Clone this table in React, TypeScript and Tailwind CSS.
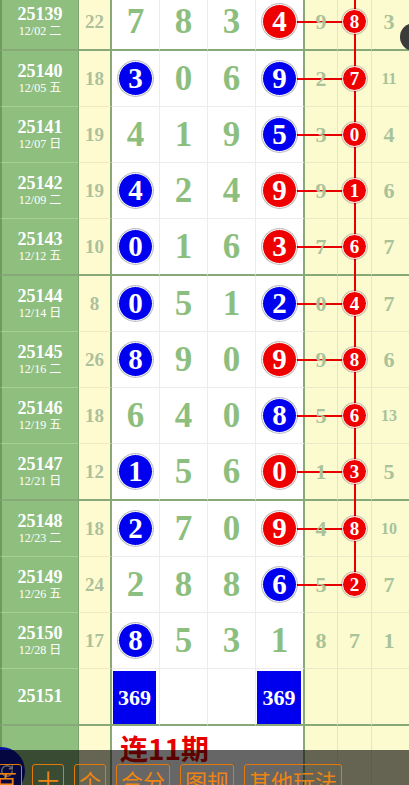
import { RotateCw } from 'lucide-react'

type Cell = [string, ('b' | 'r')?]

interface RowData {
  no: string
  date?: string
  cnt?: string
  d: Cell[]
  r: string[]
  ball?: boolean
  vline?: 'full' | 'top'
  end?: boolean
  box?: boolean
}

const rows: RowData[] = [
  { no: '25139', date: '12/02 二', cnt: '22', d: [['7'], ['8'], ['3'], ['4', 'r']], r: ['9', '8', '3'], ball: true, vline: 'full', end: true },
  { no: '25140', date: '12/05 五', cnt: '18', d: [['3', 'b'], ['0'], ['6'], ['9', 'b']], r: ['2', '7', '11'], ball: true, vline: 'full' },
  { no: '25141', date: '12/07 日', cnt: '19', d: [['4'], ['1'], ['9'], ['5', 'b']], r: ['3', '0', '4'], ball: true, vline: 'full' },
  { no: '25142', date: '12/09 二', cnt: '19', d: [['4', 'b'], ['2'], ['4'], ['9', 'r']], r: ['9', '1', '6'], ball: true, vline: 'full' },
  { no: '25143', date: '12/12 五', cnt: '10', d: [['0', 'b'], ['1'], ['6'], ['3', 'r']], r: ['7', '6', '7'], ball: true, vline: 'full', end: true },
  { no: '25144', date: '12/14 日', cnt: '8', d: [['0', 'b'], ['5'], ['1'], ['2', 'b']], r: ['0', '4', '7'], ball: true, vline: 'full' },
  { no: '25145', date: '12/16 二', cnt: '26', d: [['8', 'b'], ['9'], ['0'], ['9', 'r']], r: ['9', '8', '6'], ball: true, vline: 'full' },
  { no: '25146', date: '12/19 五', cnt: '18', d: [['6'], ['4'], ['0'], ['8', 'b']], r: ['5', '6', '13'], ball: true, vline: 'full' },
  { no: '25147', date: '12/21 日', cnt: '12', d: [['1', 'b'], ['5'], ['6'], ['0', 'r']], r: ['1', '3', '5'], ball: true, vline: 'full', end: true },
  { no: '25148', date: '12/23 二', cnt: '18', d: [['2', 'b'], ['7'], ['0'], ['9', 'r']], r: ['4', '8', '10'], ball: true, vline: 'full' },
  { no: '25149', date: '12/26 五', cnt: '24', d: [['2'], ['8'], ['8'], ['6', 'b']], r: ['5', '2', '7'], ball: true, vline: 'top' },
  { no: '25150', date: '12/28 日', cnt: '17', d: [['8', 'b'], ['5'], ['3'], ['1']], r: ['8', '7', '1'] },
  { no: '25151', d: [], r: ['', '', ''], box: true, end: true },
]

const serif = "font-['Liberation_Serif','Noto_Sans_CJK_SC',serif]"

function Ball({ v, c }: { v: string; c: 'b' | 'r' }) {
  return (
    <div
      className={`relative z-10 w-[35px] h-[35px] rounded-full flex items-center justify-center text-white text-[29px] font-bold leading-none border border-white shadow-[0_0_0_1px_rgba(0,0,0,0.25)] ${
        c === 'b' ? 'bg-[#0000ee]' : 'bg-[#ee0000]'
      }`}
    >
      {v}
    </div>
  )
}

function SmallNum({ v }: { v: string }) {
  return (
    <span className={`relative z-10 font-bold leading-none text-[#a9c29a] ${v.length > 1 ? 'text-[16px]' : 'text-[22px]'}`}>
      {v}
    </span>
  )
}

function Row({ row }: { row: RowData }) {
  const { end } = row
  const thick = 'border-b-2 border-b-[#87a977]'
  const leftB = end ? thick : 'border-b border-b-[#a5cf96]'
  const cntB = end ? thick : 'border-b border-b-[#efe9bf]'
  const digB = end ? thick : 'border-b border-b-[#ececec]'
  const rB = end ? thick : 'border-b border-b-[#e9eac6]'

  return (
    <div className={`relative flex ${end ? 'h-[57px]' : 'h-[56px]'}`}>
      {/* period + date */}
      <div className={`w-[79px] shrink-0 bg-[#8fbf7f] border-l-2 border-l-[#6e995f] border-r border-r-[#7ea56f] ${leftB} flex flex-col items-center justify-center text-white`}>
        <div className="text-[18px] font-bold leading-[19px]">{row.no}</div>
        {row.date && <div className="text-[12px] leading-[15px]">{row.date}</div>}
      </div>

      {/* gap count */}
      <div className={`w-[33px] shrink-0 bg-[#fefbd0] border-r-2 border-r-[#87a977] ${cntB} flex items-center justify-center`}>
        <span className="text-[19px] font-bold text-[#abc09b] leading-none">{row.cnt}</span>
      </div>

      {/* digits */}
      {row.box ? (
        <>
          <div className={`w-[48px] shrink-0 bg-white border-r border-r-[#ececec] ${digB} flex pl-[1px] pr-[3px] pt-[2px]`}>
            <div className="flex-1 bg-[#0000ee] flex items-center justify-center text-white text-[22px] font-bold">369</div>
          </div>
          <div className={`w-[48px] shrink-0 bg-white border-r border-r-[#ececec] ${digB}`} />
          <div className={`w-[48px] shrink-0 bg-white border-r border-r-[#ececec] ${digB}`} />
          <div className={`w-[49px] shrink-0 bg-white border-r-2 border-r-[#87a977] ${digB} flex pl-[1px] pr-[2px] pt-[2px]`}>
            <div className="flex-1 bg-[#0000ee] flex items-center justify-center text-white text-[22px] font-bold">369</div>
          </div>
        </>
      ) : (
        row.d.map(([v, c], i) => (
          <div
            key={i}
            className={`${i === 3 ? 'w-[49px] border-r-2 border-r-[#87a977]' : 'w-[48px] border-r border-r-[#ececec]'} shrink-0 bg-white ${digB} flex items-center justify-center`}
          >
            {c ? <Ball v={v} c={c} /> : <span className="text-[35px] font-bold leading-none text-[#8cbe7e]">{v}</span>}
          </div>
        ))
      )}

      {/* right trend columns */}
      <div className={`w-[33px] shrink-0 bg-[#fcfbcf] border-r border-r-[#e4e8c0] ${rB} flex items-center justify-center`}>
        <SmallNum v={row.r[0]} />
      </div>
      <div className={`w-[34px] shrink-0 bg-[#fcfbcf] border-r border-r-[#e4e8c0] ${rB} flex items-center justify-center`}>
        {row.ball ? (
          <div className="relative z-10 w-[25px] h-[25px] rounded-full bg-[#ee0000] border border-white shadow-[0_0_0_1px_rgba(0,0,0,0.2)] flex items-center justify-center text-white text-[19px] font-bold leading-none">
            {row.r[1]}
          </div>
        ) : (
          <SmallNum v={row.r[1]} />
        )}
      </div>
      <div className={`flex-1 bg-[#fcfbcf] ${rB} flex items-center justify-center pr-[3px]`}>
        <SmallNum v={row.r[2]} />
      </div>

      {/* trend lines */}
      {row.ball && <div className="absolute z-[5] left-[282px] w-[72px] top-[27px] h-[2px] bg-[#e80000]" />}
      {row.vline === 'full' && <div className="absolute z-[5] left-[354px] w-[2px] top-0 bottom-0 bg-[#e80000]" />}
      {row.vline === 'top' && <div className="absolute z-[5] left-[354px] w-[2px] top-0 h-[28px] bg-[#e80000]" />}
    </div>
  )
}

export default function App() {
  return (
    <div className={`relative w-[409px] h-[785px] overflow-hidden bg-white ${serif}`}>
      <div className="-mt-[6px]">
        {rows.map((row) => (
          <Row key={row.no} row={row} />
        ))}

        {/* summary row */}
        <div className="flex h-[59px]">
          <div className="w-[79px] shrink-0 bg-[#8fbf7f] border-l-2 border-l-[#6e995f] border-r border-r-[#7ea56f]" />
          <div className="w-[33px] shrink-0 bg-[#fefbd0] border-r-2 border-r-[#87a977]" />
          <div className="w-[193px] shrink-0 bg-white border-r-2 border-r-[#87a977] pl-[8px] pt-[4px]">
            <span className="font-['Noto_Sans_CJK_SC',sans-serif] text-[28px] font-bold leading-[36px] text-[#e60000]">连11期</span>
          </div>
          <div className="w-[33px] shrink-0 bg-[#fcfbcf] border-r border-r-[#e4e8c0]" />
          <div className="w-[34px] shrink-0 bg-[#fcfbcf] border-r border-r-[#e4e8c0]" />
          <div className="flex-1 bg-[#fcfbcf]" />
        </div>
      </div>

      {/* floating handle at right */}
      <div className="absolute left-[400px] top-[23px] w-[34px] h-[28px] rounded-full bg-[#3b3b3b]" />

      {/* floating round button bottom-left */}
      <div className="absolute left-[-23px] top-[747px] w-[48px] h-[48px] rounded-full bg-[#0c12a0] flex items-center justify-end pr-[11px]">
        <RotateCw className="w-[14px] h-[14px] text-white" strokeWidth={2.5} />
      </div>

      {/* bottom tool bar */}
      <div className="absolute left-0 right-0 top-[750px] h-[35px] bg-black/60 overflow-hidden">
        <div className="flex gap-[10px] ml-[-10px] mt-[14px] font-['Noto_Sans_CJK_SC',sans-serif]">
          {['百', '十', '个', '合分', '图规', '其他玩法'].map((t) => (
            <div key={t} className="h-[32px] px-[4px] border border-[#e2790b] rounded-[3px] text-[#f08410] text-[22px] leading-[30px] whitespace-nowrap">
              {t}
            </div>
          ))}
        </div>
      </div>
    </div>
  )
}
